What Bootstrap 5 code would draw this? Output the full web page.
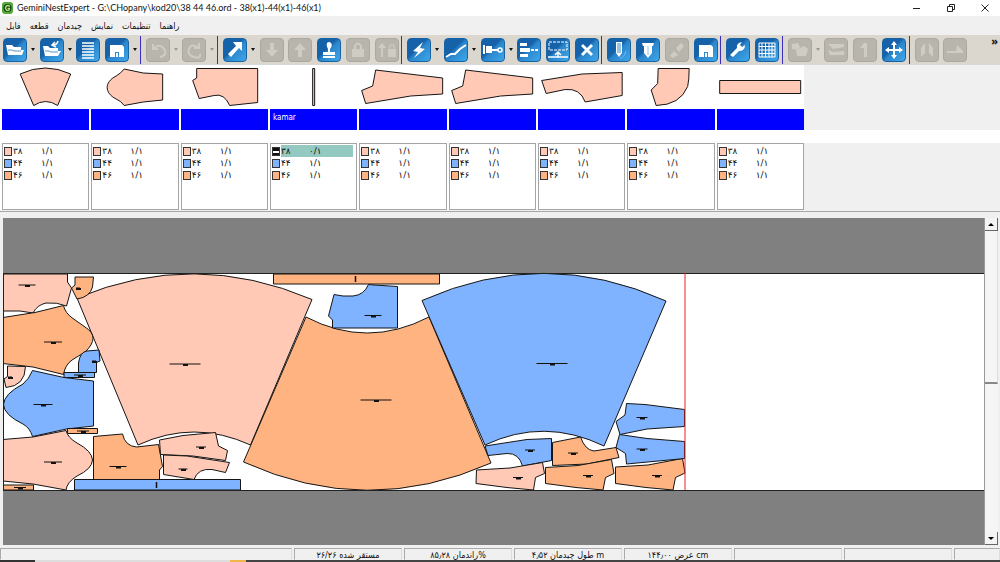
<!DOCTYPE html>
<html lang="fa" dir="ltr">
<head>
<meta charset="utf-8">
<meta name="viewport" content="width=device-width, initial-scale=1">
<title>GeminiNestExpert</title>
<link rel="stylesheet" href="https://cdn.jsdelivr.net/npm/bootstrap@5.3.0/dist/css/bootstrap.min.css">
<style>
  body { background: #f0f0f0; color: #111; font-family: "Open Sans", "DejaVu Sans", sans-serif; font-size: 10px; line-height: 12px; }
  button { font: inherit; color: inherit; background: none; border: 0; padding: 0; }
  svg { display: block; }
  .titlebar { background: #fff; height: 16px; padding-left: 2px; font-family: Lato, sans-serif; font-size: 9px; line-height: 16px; }
  .win-controls { gap: 24px; padding-right: 10px; }
  .menubar { height: 19px; padding: 1px 6px 0; gap: 9px; font-family: "DejaVu Sans Condensed", "DejaVu Sans", sans-serif; font-size: 9px; }
  .toolstrip { background: #dbd7ce; height: 29px; }
  .toolset { flex: 0 1 969px; min-width: 0; margin-left: 3px; }
  .tool { flex: 0 1 29px; min-width: 0; }
  .tool.has-menu { flex-basis: 37px; }
  .tool-sep { flex: 0 1 4px; min-width: 0; height: 28px; }
  .tool-sep::before { content: ""; display: block; width: 1px; height: 28px; background: #3c2fc0; margin-left: -2px; }
  .tool-face { width: 24px; height: 24px; border-radius: 4px; color: #fff; border: 1px solid #1763a4; background: linear-gradient(135deg, #1562aa 0 42%, #2b86cc 52%, #3fa8ea); }
  .tool-face.idle { color: #cfccc4; border-color: #aba89f; background: #b8b5ac; }
  .tool-face svg { width: 22px; height: 22px; }
  .caret { width: 0; height: 0; margin-left: 4px; border: 2px solid transparent; border-top: 3px solid #111; border-bottom: 0; }
  .caret.idle { border-top-color: #999; }
  .overflow-btn { margin: 0 2px 18px auto; font-size: 11px; font-weight: 700; }
  .nine { display: grid; grid-template-columns: repeat(9, minmax(0, 1fr)); gap: 2px; width: 80.4%; padding-left: 2px; }
  .shapes { border-top: 1px solid #d8d8d8; height: 66px; }
  .shapes .nine, .spacer-strip { background: #fff; }
  .thumb { height: 44px; }
  .thumb svg, .marker svg { width: 100%; height: 100%; }
  .piece-name { background: #0000fe; color: #fff; height: 21px; padding: 3px; font-family: "DejaVu Sans Condensed", sans-serif; font-size: 8px; }
  .spacer-strip { height: 13px; }
  .sizes { border-bottom: 1px solid #a8a8a8; height: 69px; }
  .sizes .nine { background: #fff; height: 67px; }
  .size-box { border: 1px solid #a5a5a5; padding: 1px; }
  .size-list { width: 97%; font-family: "DejaVu Sans", sans-serif; font-size: 9px; line-height: 11px; }
  .size-list td { padding: 0; height: 12px; }
  .size-list td:first-child { width: 9px; }
  .size-list td:nth-child(2) { width: 28px; }
  .size-list .picked td + td { background: #93c9c0; }
  .swatch { display: block; width: 8px; height: 9px; border: 1px solid #333; }
  .work { margin: 6px 2px 0 3px; }
  .marker { background: #808080; min-width: 0; }
  .scroller { width: 14px; background: #f5f5f5; border-left: 1px solid #999; }
  .scroller button { height: 13px; background: #f4f4f4; border-right: 1px solid #666; border-bottom: 1px solid #666; }
  .scroll-thumb { height: 153px; border-right: 1px solid #ddd; border-bottom: 2px solid #888; }
  .statusbar { margin-top: 3px; height: 12px; gap: 2px; font-family: "DejaVu Sans Condensed", "DejaVu Sans", sans-serif; font-size: 9px; }
  .status-cell { flex: 0 0 10.8%; border: 1px solid #aaa; border-color: #aaa #ddd #f0f0f0 #aaa; text-align: center; white-space: nowrap; padding-top: 1px; line-height: 11px; }
  .status-cell.lead-cell { flex-basis: 29.2%; }
  .status-cell.tail-cell { flex: 1 1 0; }
  .taskbar-edge { height: 2px; background: linear-gradient(90deg, #333 3.5%, #ddd 3.5% 23%, #f0b64a 23% 24.6%, #444 24.6%); }
  .ln { stroke: #151515; stroke-width: 1; stroke-linejoin: round; }
  .pk { fill: #ffc9b5; } .bl { fill: #7fb2ff; } .og { fill: #ffb380; }
</style>
</head>
<body class="overflow-hidden">
<header class="titlebar d-flex align-items-center">
  <svg width="11" height="12" viewBox="0 0 11 12" class="flex-shrink-0"><rect width="11" height="12" rx="3" fill="#55a83a"/><circle cx="5.500" cy="6" r="4" fill="#143c17"/><path d="M8 4.500Q5.500 2.500 4 4.500T5 8.500Q7.500 9 7.500 6.500H5.500" fill="none" stroke="#a9ec7c" stroke-width="1.300"/></svg>
  <span class="text-nowrap ms-1">GeminiNestExpert - G:\CHopany\kod20\38 44 46.ord - 38(x1)-44(x1)-46(x1)</span>
  <div class="win-controls d-flex ms-auto">
    <button aria-label="Minimize"><svg width="10" height="10"><path d="M1 5.500H8" stroke="#222"/></svg></button>
    <button aria-label="Restore"><svg width="10" height="10" fill="none" stroke="#222"><path d="M1.500 3.500h5v5h-5zM3.500 3v-1.500h5v5H7"/></svg></button>
    <button aria-label="Close"><svg width="10" height="10"><path d="M1.500 1.500l7 7M8.500 1.500l-7 7" stroke="#222"/></svg></button>
  </div>
</header>
<nav class="menubar d-flex align-items-center">
  <button>فایل</button><button>قطعه</button><button>چیدمان</button><button>نمایش</button><button>تنظیمات</button><button>راهنما</button>
</nav>
<div class="toolstrip d-flex align-items-center">
  <div class="toolset d-flex align-items-center" id="toolset"></div>
  <button class="overflow-btn" aria-label="More tools">»</button>
</div>

<section class="shapes"><div class="nine" id="thumbs"></div></section>
<div class="spacer-strip"></div>
<section class="sizes"><div class="nine" id="sizes"></div></section>

<main class="work d-flex">
  <div class="marker flex-grow-1">
    <svg viewBox="3 218 981 327">
      <path fill="#fff" d="M3 273H984V490H3z"/>
      <g class="ln">
        <path class="pk" d="M77 298Q194 249 312 299.500L250.500 445Q194 419 138 445Z"/>
        <path class="og" d="M306 317Q367 349 429 317L491 463Q367 518 243.500 462Z"/>
        <path class="bl" d="M422 300.500Q544 246 666 301L604 446Q544 417 485 445Z"/>
        <path class="og" d="M273.500 274H439.500V284H273.500z"/>
        <path class="bl" d="M368.500 284.500L374 285 397.500 286.500V328H332.500V320L328.500 316 334 294.500 343 296 353 296Q364 295 368.500 284.500Z"/>
        <path class="pk" d="M3 274H67.500V282L71.500 288 66.500 306Q57 302 46 303 37 305 33 313L20 311H3Z"/>
        <path class="og" d="M75 277H93.500L92.500 287Q90 297 77 299L71.500 288 75 285Z"/>
        <path class="og" d="M3 317.500L35 312.500 63.500 305.500Q65 313 73 318.500L85 327Q101 337 85 352L72 360Q65 365 63.500 374.500L33 367 3 363.500Z"/>
        <path class="bl" d="M64 372.500H94.500V377.500H64z"/>
        <path class="bl" d="M99 350L100 361 96.500 362.500V372.500H78.500V363Q80 352 87 351Z"/>
        <path class="pk" d="M7.500 366L25.500 366.500Q25 386 6 387.500L4 379 7.500 376.500Z"/>
        <path class="bl" d="M32.500 370.500L64 377.500 93.500 381V426L66.500 429 32.500 436.500Q30 428 23 424 4 415 3.500 404.500 4 394 23 384 29 379 32.500 370.500Z"/>
        <path class="og" d="M67.500 428.500H97.500V433.500H67.500z"/>
        <path class="pk" d="M3 439.500L33 437 66 430.500Q68 438 77 443 92 451 92.500 460 92 469 77 476 67 482 66 490L33 484 3 481Z"/>
        <path class="og" d="M3 485H33.500V490H3z"/>
        <path class="og" d="M93.500 436.500L122.500 434Q125 446 136.500 447L158.500 444.500 162.500 466.500 159.500 470V480H93.500Z"/>
        <path class="bl" d="M74.500 479.500H240.500V490H74.500z"/>
        <path class="pk" d="M159.500 440L183 435.500 215.500 432.500 218.500 446 227.500 450.500 225.500 460.500 193 456 160.500 454.500Z"/>
        <path class="pk" d="M163.500 455L187 456 229.500 462.500 225.500 472.500 212 469.500Q198 468 194 479.500L163.500 474.500Z"/>
        <path class="bl" d="M485 446L527 439.500 551.500 438.500V460.500L522.500 466Q519 453 507 453.500L488 455.500Z"/>
        <path class="og" d="M552.500 442.500L580.500 437Q585 450 594 451L616 447.500 619 457.500 587 464 552.500 465.500Z"/>
        <path class="pk" d="M476.500 470L510 468 542.500 462.500 544.500 473.500 535.500 477.500 533.500 490 507 487.500 476 483.500Z"/>
        <path class="og" d="M545.500 467.500L578 465.500 611.500 459.500 614 473.500 605.500 477.500 603 490 576 487.500 545.500 483.500Z"/>
        <path class="og" d="M615.500 467L648 465 682.500 458.500 685 473 675.500 477.500 673 490 646 487.500 615.500 483.500Z"/>
        <path class="bl" d="M626.500 403.500L645 404.500 684.500 409.500V426.500L647 429 620 434.500 616 421.500 625 415Z"/>
        <path class="bl" d="M619.500 434.500L647 438.500 684.500 441.500V458.500L626.500 464 625.500 453.500 616 447.500Z"/>
      </g>
      <path stroke="#222" d="M3 273.500H984M3 490.500H984M3.500 273V490"/>
      <path stroke="#ee2222" d="M685 273V490"/>
      <g stroke="#111" id="grain" fill="none"><path d="M355.500 276V282M156.500 482V488" stroke-width="1.500"/></g>
    </svg>
  </div>
  <div class="scroller d-flex flex-column flex-shrink-0">
    <button aria-label="Scroll up"><svg width="12" height="12"><path d="M3 8L6 5 9 8z"/></svg></button>
    <div class="scroll-thumb"></div>
    <button class="mt-auto" aria-label="Scroll down"><svg width="12" height="12"><path d="M3 5L6 8 9 5z"/></svg></button>
  </div>
</main>
<footer>
  <div class="statusbar d-flex">
    <div class="status-cell lead-cell"></div>
    <div class="status-cell" dir="rtl">مستقر شده ۲۶/۲۶</div>
    <div class="status-cell" dir="rtl">%راندمان ۸۵٫۲۸</div>
    <div class="status-cell" dir="rtl">m طول چیدمان ۴٫۵۲</div>
    <div class="status-cell" dir="rtl">cm عرض ۱۴۴٫۰۰</div>
    <div class="status-cell"></div><div class="status-cell"></div><div class="status-cell tail-cell"></div>
  </div>
  <div class="taskbar-edge"></div>
</footer>

<script src="https://cdn.jsdelivr.net/npm/bootstrap@5.3.0/dist/js/bootstrap.bundle.min.js"></script>
<script>
  // Icon drawings on a 22 x 22 grid; white shapes take currentColor.
  const S = 'fill="none" stroke="currentColor" stroke-width="2"';
  const icons = {
    open: '<path d="M2 6h6l2 2h7v3h3l-2 5H4z"/><path d="M4 11h4l2 1h7" fill="none" stroke="#2a7fc4" stroke-width=".8"/>',
    recent: '<path d="M2 7h5l2 2h8v3h3l-3 5H4z"/><path d="M4 12h4l2 1h7" fill="none" stroke="#2a7fc4" stroke-width=".8"/><path d="M17 2Q16 6 12 6M14 3l-3 3 4 2" fill="none" stroke="currentColor" stroke-width="1.500"/>',
    list: `<path d="M5 4h12M5 7h12M5 10h12M5 13h12M5 16h12M5 19h12" ${S.replace('"2"', '"1.500"')}/>`,
    save: '<path d="M4 6h12l2 2v10h-5v-5H9v5H4z"/><path d="M10 14h2v4h-2z"/>',
    undo: `<path d="M6 5v5h5M7 9q6-5 10 1t-4 8" ${S}/>`,
    redo: `<path d="M16 4v5h-5M15 8Q8 4 6 10t5 8 6-3" ${S}/>`,
    arrow: '<path d="M18 3v9l-3-3-8 9-3-3 8-8-3-4z"/>',
    down: '<path d="M9 4h4v7h4l-6 7-6-7h4z"/>',
    up: '<path d="M9 18h4v-7h4l-6-7-6 7h4z"/>',
    stamp: '<path d="M9 4q2-2 4 0t-1 6v3h5v3H5v-3h5v-3Q8 6 9 4zM5 17h12v2H5z"/>',
    lock: '<path d="M5 10h12v8H5z"/><path d="M8 10V7q3-5 6 0v3" fill="none" stroke="currentColor" stroke-width="2"/>',
    uplock: '<path d="M5 18V9H2l4-5 4 5H7v9zM12 10h8v8h-8z"/><path d="M14 10V6h4v4" fill="none" stroke="currentColor"/>',
    bolt: '<path d="M15 3L5 12l5 1-4 6 11-9-5-1z"/>',
    line: `<path d="M1 18l5-3 4 0 5-5 6-4" ${S}/>`,
    plug: '<path d="M1 6h2v9H1zM4 7h6v7H4zM10 10h6v2h-6z"/><circle cx="18" cy="11" r="2" fill="none" stroke="currentColor" stroke-width="1.500"/>',
    align: '<path d="M2 4h7v3H2zM2 9h10v4H2zM2 15h8v3H2zM13 10h3v2h-3zM17 10h3v2h-3z"/>',
    inside: `<path d="M2 3h18v8H2z" fill="none" stroke="currentColor" stroke-dasharray="3 1"/><path d="M1 18h20M11 18v-5M8 16l3-3 3 3" ${S.replace('"2"', '"1.500"')}/>`,
    cross: '<path d="M5 7l2-2 4 4 4-4 2 2-4 4 4 4-2 2-4-4-4 4-2-2 4-4z"/>',
    pencil: '<path d="M8 3h6v11l-3 4-3-4z"/><path d="M10 4v10M12 4v10" stroke="#3389cc"/><path d="M12 19q4 0 6-7" fill="none" stroke="#78bced"/>',
    screw: '<path d="M5 4h12l-1 3h-1v7l-4 5-4-5V7H6z"/><path d="M11 7v9" stroke="#8fc6ee"/>',
    chain: '<path d="M4 17l4-5 4 4-5 3zM10 9l5-5 3 3-5 6z"/>',
    wrench: '<path d="M18 6q0 6-6 6l-6 6-3-2 7-7q-1-5 5-6l-2 3 2 2z"/>',
    grid: `<path d="M3 4h16v14H3zM3 7.500h16M3 11h16M3 14.500h16M6 4v14M9.500 4v14M13 4v14M16 4v14" fill="none" stroke="currentColor"/>`,
    pieces: '<path d="M3 5l6-1 2 4-3 3-5-1zM7 11l8-4 4 3-2 7H8z"/>',
    flip: '<path d="M3 5h16v3L8 10zM3 11l5 2 11-1v4H5z"/>',
    one: '<path d="M10 4h3v14h-3V9H6z"/>',
    move: '<path d="M11 2l3 4h-2v4h4V8l4 3-4 3v-2h-4v4h2l-3 4-3-4h2v-4H6v2l-4-3 4-3v2h4V6H8z"/>',
    mirror: '<path d="M9 4v10l-4 4V9zM13 4v10l4 4V9z"/>',
    turn: '<path d="M3 12h16v2H3zM13 6l6 6h-7z"/>'
  };
  // name, modifiers: m = has a menu, x = idle; "|" is a separator.
  const tools = ['open m','recent m','list','save m','|','undo mx','redo mx','|','arrow m','down x','up x','stamp','lock x','uplock x','|',
    'bolt m','line m','plug m','align','inside','cross','|','pencil','screw','chain x','save','|','wrench','grid','|',
    'pieces mx','flip x','one x','move','|','mirror x','turn x'];
  document.getElementById('toolset').innerHTML = tools.map(t => {
    if (t === '|') return '<span class="tool-sep"></span>';
    const [name, mod = ''] = t.split(' ');
    const idle = mod.includes('x') ? ' idle' : '', menu = mod.includes('m');
    return `<span class="tool d-flex align-items-center${menu ? ' has-menu' : ''}"><button class="tool-face flex-shrink-0${idle}" aria-label="${name}"><svg viewBox="0 0 22 22" fill="currentColor">${icons[name]}</svg></button>${menu ? `<span class="caret${idle}"></span>` : ''}</span>`;
  }).join('');

  const sleeve = 'M16.500 5L83.500 13V29L51.500 31 6.500 38.500 2.500 25.500 13.500 21Z';
  const shapes = [
    'M18 9Q43 -3 68.500 9L55.500 40.500Q43.500 32.500 31.500 40.500Z',
    'M33 4L52 8 71.500 9V35L52 37 33 40.500Q30 36 25 34C13 28 13 17 25 11Q30 8 33 4Z',
    'M15.500 3.500H76.500V37.500L48.500 40.500Q43 28 33 30.500L18 33.500 11.500 15.500 15.500 13Z',
    'M42.500 3.500H44.500V40.500H42.500Z', sleeve, sleeve,
    'M3.500 15.500L44 9 84 7.500V30.500L47 37Q42 23 27 24.500L8 28.500Z',
    'M31 3.500H62Q62 15 60.500 21.500 53 40 29 40.500L24 25 30.500 18.500Z',
    'M2.500 15.500H83.500V28.500H2.500Z'];
  document.getElementById('thumbs').innerHTML = shapes.map((d, i) =>
    `<div><div class="thumb"><svg viewBox="0 0 87 44"><path class="ln pk" d="${d}"/></svg></div><div class="piece-name">${i === 3 ? 'kamar' : ''}</div></div>`).join('');

  const sizes = [['۳۸', '#ffc9b5'], ['۴۴', '#7fb2ff'], ['۴۶', '#ffb380']];
  document.getElementById('sizes').innerHTML = shapes.map((_, i) =>
    `<div class="size-box"><table class="size-list">${sizes.map(([n, c], r) => {
      const picked = i === 3 && r === 0;
      return `<tr class="${picked ? 'picked' : ''}"><td><span class="swatch" style="background:${picked ? 'linear-gradient(#111 50%,#fff 50% 70%,#111 70%)' : c}"></span></td><td>${n}</td><td>${picked ? '۰/۱' : '۱/۱'}</td></tr>`;
    }).join('')}</table></div>`).join('');

  // Grain line of each piece: centre x, y, length.
  const grain = [[185,364,31],[376,400,31],[552,363.500,31],[373,315.500,17],[27,285,17],[53,342,18],[43,404.500,19],[53,462,18],[118,466.500,17],
    [201,447,10],[183,469,9],[530,450,10],[573,453,10],[518,477.500,10],[588,475.500,10],[657,475.500,10],[642,417.500,11],[642,449,11],
    [78,288,4],[94,361,4],[10,377,4],[80,375,12],[83,431,12],[20,487.500,12]];
  document.getElementById('grain').innerHTML += grain.map(([x, y, l]) =>
    `<path d="M${x - l / 2} ${y}h${l}"/><path d="M${x - 2} ${y + 1}h5" stroke-width="2"/>`).join('');
</script>
</body>
</html>
